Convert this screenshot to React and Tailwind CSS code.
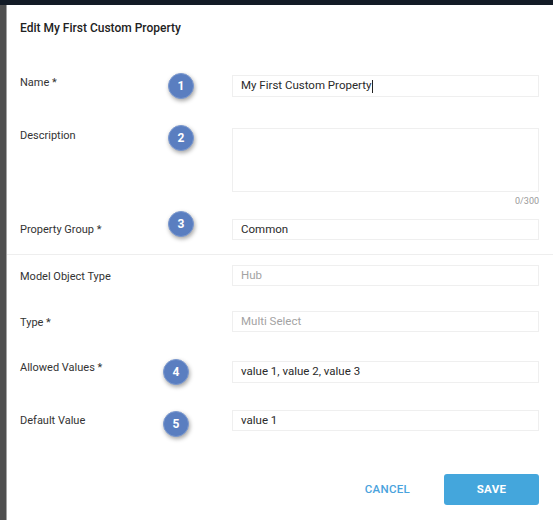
import React from "react";

function Badge({ n, className }) {
  return (
    <div
      className={`absolute w-[26px] h-[26px] rounded-full bg-[#5a7ec0] border border-[#7a98cf] text-white text-[12px] font-bold flex items-center justify-center shadow-[1px_2px_4px_rgba(0,0,0,0.35)] ${className}`}
    >
      {n}
    </div>
  );
}

function Row({ label, labelOffset, children, className = "" }) {
  return (
    <div className={`relative flex items-start ${className}`}>
      <div
        className="w-[225px] pl-[13px] text-[11px] leading-4 text-[#333]"
        style={{ marginTop: labelOffset }}
      >
        {label}
      </div>
      <div className="flex-1 pr-[14px]">{children}</div>
    </div>
  );
}

function Field({ value, muted, h = "h-[21px]" }) {
  return (
    <div
      className={`${h} border border-[#efefef] flex items-center px-2 text-[11.5px] ${
        muted ? "text-[#a3a3a3]" : "text-[#2a2a2a]"
      }`}
    >
      {value}
    </div>
  );
}

export default function App() {
  return (
    <div className="w-[553px] h-[520px] flex flex-col bg-white overflow-hidden font-['Roboto','Liberation_Sans',sans-serif]">
      <div className="h-[5px] bg-[#131b26]" />
      <div className="flex flex-1">
        <div className="w-[7px] bg-[#4f4f4f] border-r border-[#a3a3a3]" />
        <div className="flex-1 flex flex-col">
          <div className="pt-[13px] pl-[13px] text-[12px] leading-5 font-medium text-[#222]">
            Edit My First Custom Property
          </div>

          <Row label="Name *" labelOffset={0} className="mt-[37px]">
            <div className="h-[22px] border border-[#efefef] flex items-center px-2 text-[11.5px] text-[#2a2a2a]">
              My First Custom Property
              <span className="inline-block w-px h-[13px] bg-[#222] ml-px" />
            </div>
            <Badge n="1" className="left-[161px] top-[-2px]" />
          </Row>

          <Row label="Description" labelOffset={0} className="mt-[31px]">
            <div className="h-[64px] border border-[#efefef]" />
            <div className="mt-[3px] text-right text-[9px] leading-3 text-[#9a9a9a]">0/300</div>
            <Badge n="2" className="left-[161px] top-[-3px]" />
          </Row>

          <Row label="Property Group *" labelOffset={3} className="mt-[12px]">
            <Field value="Common" />
            <Badge n="3" className="left-[161px] top-[-8px]" />
          </Row>

          <div className="mt-[14px] h-px bg-[#eeeeee]" />

          <Row label="Model Object Type" labelOffset={4} className="mt-[10px]">
            <Field value="Hub" muted />
          </Row>

          <Row label="Type *" labelOffset={4} className="mt-[25px]">
            <Field value="Multi Select" muted />
          </Row>

          <Row label="Allowed Values *" labelOffset={-1} className="mt-[29px]">
            <Field value="value 1, value 2, value 3" h="h-[22px]" />
            <Badge n="4" className="left-[156px] top-[-2px]" />
          </Row>

          <Row label="Default Value" labelOffset={3} className="mt-[27px]">
            <Field value="value 1" />
            <Badge n="5" className="left-[156px] top-[1px]" />
          </Row>

          <div className="mt-[43px] flex items-center justify-end pr-[14px]">
            <button
              type="button"
              className="mr-[34px] text-[11.5px] font-medium tracking-wide text-[#4aa3dd]"
            >
              CANCEL
            </button>
            <button
              type="button"
              className="w-[95px] h-[31px] rounded-[3px] bg-[#44a6dc] text-white text-[11.5px] font-bold tracking-wide"
            >
              SAVE
            </button>
          </div>
        </div>
      </div>
    </div>
  );
}
